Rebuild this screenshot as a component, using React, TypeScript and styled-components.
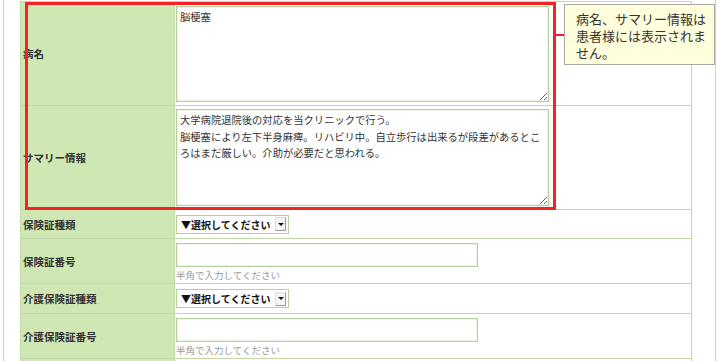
import styled, { createGlobalStyle } from "styled-components";

const GlobalStyle = createGlobalStyle`
  html, body {
    margin: 0;
    padding: 0;
    background: #ffffff;
  }
  body {
    font-family: "Noto Sans CJK JP", "Noto Sans", sans-serif;
    color: #333;
  }
`;

const Page = styled.div`
  width: 720px;
  height: 361px;
  overflow: hidden;
`;

const Frame = styled.div`
  position: relative;
  margin-left: 3px;
  width: 713px;
  height: 361px;
  box-sizing: border-box;
  border-left: 1px solid #c6dcb0;
  border-right: 1px solid #c6dcb0;
  padding: 1px 0 0 16px;
`;

const Table = styled.table`
  width: 672px;
  border-collapse: collapse;
  table-layout: fixed;
`;

const Label = styled.th<{ $h: number }>`
  width: 151px;
  height: ${(p) => p.$h}px;
  padding: 0 0 0 2px;
  background: #cfe7b3;
  border: 1px solid #c0d9a7;
  text-align: left;
  font-size: 10.5px;
  font-weight: 700;
  color: #333;
  white-space: nowrap;
`;

const Value = styled.td`
  padding: 2px 1px 2px 1px;
  border: 1px solid #c0d9a7;
  vertical-align: middle;
`;

const TextArea = styled.textarea<{ $h: number }>`
  display: block;
  width: 373px;
  height: ${(p) => p.$h}px;
  box-sizing: border-box;
  margin: 0;
  padding: 2px 3px;
  border: 1px solid #b6d09d;
  box-shadow: inset 0 0 0 1px #eef5e6;
  font-family: "Noto Sans CJK JP", sans-serif;
  font-size: 10.3px;
  line-height: 16.5px;
  color: #333;
  resize: both;
  outline: none;
  overflow: hidden;
`;

const Select = styled.div`
  display: flex;
  align-items: center;
  justify-content: space-between;
  width: 113px;
  height: 19px;
  box-sizing: border-box;
  padding: 0 2px 0 4px;
  border: 1px solid #b6d09d;
  background: #fff;
  font-size: 10px;
  font-weight: 700;
  color: #111;
  white-space: nowrap;
`;

const Arrow = styled.span`
  display: flex;
  align-items: center;
  justify-content: center;
  width: 9px;
  height: 12px;
  border: 1px solid #9a9a9a;
  border-top-color: #ddd;
  border-left-color: #ddd;
  background: #f4f4f4;
  &::after {
    content: "";
    border-left: 3px solid transparent;
    border-right: 3px solid transparent;
    border-top: 3px solid #111;
  }
`;

const Input = styled.input`
  display: block;
  width: 302px;
  height: 24px;
  box-sizing: border-box;
  margin: 2px 0 0;
  border: 1px solid #b6d09d;
  box-shadow: inset 0 0 0 1px #eef5e6;
  outline: none;
`;

const Hint = styled.div`
  margin-top: 2px;
  font-size: 9.5px;
  line-height: 12px;
  color: #999;
`;

const Highlight = styled.div`
  position: absolute;
  left: 21px;
  top: 2px;
  width: 531px;
  height: 208px;
  box-sizing: border-box;
  border: 3px solid #f42323;
  pointer-events: none;
`;

const Connector = styled.div`
  position: absolute;
  left: 552px;
  top: 34px;
  width: 9px;
  height: 2px;
  background: #f42323;
`;

const Callout = styled.div`
  position: absolute;
  left: 560px;
  top: 4px;
  width: 151px;
  height: 61px;
  box-sizing: border-box;
  padding: 5px 6px 0 11px;
  background: #ffffdd;
  border: 1px solid #a9a99f;
  font-size: 13px;
  line-height: 17px;
  color: #333;
`;

const SelectField = () => (
  <Select>
    ▼選択してください
    <Arrow />
  </Select>
);

const NumberField = () => (
  <>
    <Input type="text" />
    <Hint>半角で入力してください</Hint>
  </>
);

export default function App() {
  return (
    <Page>
      <GlobalStyle />
      <Frame>
        <Table>
          <tbody>
            <tr>
              <Label $h={103}>病名</Label>
              <Value>
                <TextArea $h={96} defaultValue="脳梗塞" />
              </Value>
            </tr>
            <tr>
              <Label $h={103}>サマリー情報</Label>
              <Value>
                <TextArea
                  $h={97}
                  defaultValue={
                    "大学病院退院後の対応を当クリニックで行う。\n脳梗塞により左下半身麻痺。リハビリ中。自立歩行は出来るが段差があるところはまだ厳しい。介助が必要だと思われる。"
                  }
                />
              </Value>
            </tr>
            <tr>
              <Label $h={28}>保険証種類</Label>
              <Value>
                <SelectField />
              </Value>
            </tr>
            <tr>
              <Label $h={44}>保険証番号</Label>
              <Value>
                <NumberField />
              </Value>
            </tr>
            <tr>
              <Label $h={29}>介護保険証種類</Label>
              <Value>
                <SelectField />
              </Value>
            </tr>
            <tr>
              <Label $h={43}>介護保険証番号</Label>
              <Value>
                <NumberField />
              </Value>
            </tr>
            <tr>
              <Label $h={28}></Label>
              <Value></Value>
            </tr>
          </tbody>
        </Table>
        <Highlight />
        <Connector />
        <Callout>病名、サマリー情報は患者様には表示されません。</Callout>
      </Frame>
    </Page>
  );
}
